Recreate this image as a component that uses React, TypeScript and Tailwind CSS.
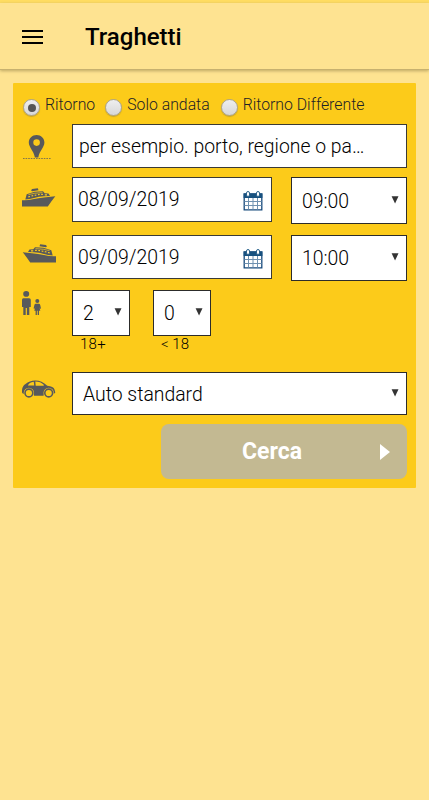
import React, { useState } from "react";

const Arrow = () => (
  <svg className="w-[8px] h-[8px] mb-[2px] shrink-0" viewBox="0 0 8 8" fill="#333">
    <path d="M0.6 0.3h6.900L4.050 7.500z" />
  </svg>
);

const PinIcon = () => (
  <svg className="w-[30px] h-[25px]" viewBox="0 0 30 25">
    <path
      fill="#58595b"
      fillRule="evenodd"
      d="M14.600 0c4.400 0 7.800 3.300 7.800 7.500C22.400 12.200 17.600 15.500 16.300 22.500h-3.400C11.600 15.500 6.800 12.200 6.800 7.500 6.800 3.300 10.200 0 14.600 0zm0 4.300a3.300 3.300 0 100 6.600 3.300 3.300 0 000-6.600z"
    />
    <path stroke="#58595b" strokeOpacity=".75" strokeWidth="1" strokeDasharray="1.600 1" d="M1 23.500h28" />
  </svg>
);

const FerryIcon = ({ back = false }: { back?: boolean }) => (
  <svg
    className={back ? "w-[34px] h-[20px] -scale-x-100" : "w-[34px] h-[20px]"}
    viewBox="0 0 34 20"
    fill="#58595b"
  >
    <path d="M0 12.300Q6 12.600 12 11.100T24 9.200L33.300 8.200Q29.500 13 25.800 18.500H0z" />
    <path d="M3.300 11.400L4.700 6.300L12.500 3.800L21 3.200L22.700 5.300L26.500 5.500L28 8L22 8.300Q17 8.600 12 9.900Q8 11.200 3.300 11.400z" />
    <path d="M9 2.200L10.200 .9L15.800 .3L16.500 2.200L10 3.200z" />
    <path
      stroke="#fccb1a"
      strokeWidth="1.200"
      fill="none"
      d="M6.300 8.900l1.700-.4M9.500 8l1.700-.4M12.700 7.300l1.700-.3M16 6.700l1.700-.2M19.200 6.400h1.700M22.800 6.900h2.200"
    />
    <path stroke="#fccb1a" strokeWidth=".7" fill="none" d="M6.500 6.600Q12 4.900 20.500 4.600" />
  </svg>
);

const PeopleIcon = () => (
  <svg className="w-[20px] h-[25px]" viewBox="0 0 20 25" fill="#58595b">
    <ellipse cx="4.200" cy="2.900" rx="3" ry="2.800" />
    <path d="M1.300 7.300h5.800Q8.800 7.300 8.800 9v7H7.300V24H4.900v-7H3.700v7H1.300v-8H0V9Q0 7.300 1.300 7.300z" />
    <circle cx="15.300" cy="9.900" r="2" />
    <path d="M13.700 12.700h3.200q1 0 1.300 1.200l.8 3.500-1.100.3-.8-2.400 1.200 4.500H17V24h-1.300v-4.200h-.8V24h-1.300v-4.200h-1.300l1.200-4.500-.8 2.400-1.100-.3.800-3.500Q12.700 12.700 13.700 12.700z" />
  </svg>
);

const CarIcon = () => (
  <svg className="w-[34px] h-[18px]" viewBox="0 0 34 18">
    <path
      fill="#58595b"
      d="M0 12.500Q-.5 6.500 3.500 4Q7.500 .5 13 .5Q19.500 .3 25.300 5.800Q31.500 6.500 32.500 9.500L33.300 12.500L32 13.700H22L21.500 15.800H12L11.500 13.700H1z"
    />
    <path fill="#fccb1a" d="M5.800 5.400Q7 2.500 11.800 1.700L12.200 5.600H5.800zM13.300 1.600Q18.500 1.600 22 5L21.500 5.700H13.700z" />
    <circle cx="6.900" cy="12.900" r="5.200" fill="#fccb1a" />
    <circle cx="6.900" cy="13" r="3.900" fill="#fccb1a" stroke="#58595b" strokeWidth="1.600" />
    <circle cx="26.700" cy="12.900" r="5.200" fill="#fccb1a" />
    <circle cx="26.700" cy="13" r="3.900" fill="#fccb1a" stroke="#58595b" strokeWidth="1.600" />
  </svg>
);

const CalendarIcon = () => (
  <svg className="w-[20px] h-[20px]" viewBox="0 0 20 20">
    <path fill="#fff" stroke="#174a7c" strokeWidth="1.300" d="M1.200 3h17.600v15.800H1.200z" />
    <path fill="#17517f" d="M.6 2.500h18.800v4.500H.6z" />
    <path stroke="#6f91b0" strokeWidth="1" d="M5.500 7v11.500M10 7v11.500M14.500 7v11.500M1.500 10.500h17M1.500 14.500h17" />
    <rect x="3.500" y=".5" width="3" height="5" rx="1.500" fill="#fff" stroke="#2c638c" />
    <rect x="13.500" y=".5" width="3" height="5" rx="1.500" fill="#fff" stroke="#2c638c" />
  </svg>
);

const Radio = ({ label, checked, onClick, className }: any) => (
  <button type="button" onClick={onClick} className={`flex items-start ${className}`}>
    <span className="mt-[4px] w-[17px] h-[17px] rounded-full border border-[#aaa38c] bg-linear-to-b from-[#eee] to-[#d8d8d8] flex items-center justify-center shadow-[0_1px_1px_#c9a529]">
      {checked && <span className="w-[8px] h-[8px] rounded-full bg-[#555]"></span>}
    </span>
    <span className="ml-[5px] text-[15.8px] leading-[20px] whitespace-nowrap text-[#1c2226]">{label}</span>
  </button>
);

const Select = ({ value, className }: { value: string; className: string }) => (
  <div
    className={`flex items-center justify-between bg-white border-[1.5px] border-[#2c2c2a] pl-[10px] pr-[7px] ${className}`}
  >
    <span className="pt-[2px]">{value}</span>
    <Arrow />
  </div>
);

const DateField = ({ value, className }: { value: string; className: string }) => (
  <div
    className={`flex items-center justify-between w-[200px] bg-white border border-[#3a3a35] pl-[5px] pr-[8px] ${className}`}
  >
    <span className="pt-[1px]">{value}</span>
    <span className="mt-[3px]">
      <CalendarIcon />
    </span>
  </div>
);

const trips = ["Ritorno", "Solo andata", "Ritorno Differente"];
const tripMargins = ["", "ml-[10px]", "ml-[11px]"];

const App = () => {
  const [trip, setTrip] = useState(0);

  return (
    <div className="min-h-[800px] w-full bg-[#fee391] font-['Roboto',sans-serif]">
      <div className="h-[3px] bg-[#ffdd61]"></div>
      <header className="flex items-center h-[67px] pl-[22px] pt-[1px] bg-[#fee391] border-b border-[#c7b16f] shadow-[0_1px_3px_#bda764]">
        <div className="w-[21px] h-[14px] flex flex-col justify-between">
          <span className="h-[2px] bg-black"></span>
          <span className="h-[2px] bg-black"></span>
          <span className="h-[2px] bg-black"></span>
        </div>
        <h1 className="ml-[42px] text-[24px] font-medium leading-none text-black">Traghetti</h1>
      </header>

      <form className="mt-[13px] ml-[13px] w-[403px] h-[405px] rounded-[1px] bg-[#fccb1a] text-[19.4px] font-light leading-none text-black">
        <div className="flex h-[41px] pl-[10px] pt-[12px]">
          {trips.map((label, index) => (
            <Radio
              key={label}
              label={label}
              checked={trip === index}
              onClick={() => setTrip(index)}
              className={tripMargins[index]}
            />
          ))}
        </div>

        <div className="flex h-[53px] pl-[9px]">
          <div className="w-[50px] pt-[11px]">
            <PinIcon />
          </div>
          <div className="flex items-center w-[335px] h-[44px] bg-white border border-[#3a3a35] pl-[6px] pt-[1px]">
            per esempio. porto, regione o pa…
          </div>
        </div>

        <div className="flex h-[58px] pl-[9px]">
          <div className="w-[50px] pt-[11px]">
            <FerryIcon />
          </div>
          <DateField value="08/09/2019" className="h-[45px]" />
          <Select value="09:00" className="ml-[19px] w-[116px] h-[47px]" />
        </div>

        <div className="flex h-[55px] pl-[9px]">
          <div className="w-[50px] pt-[9px]">
            <FerryIcon back />
          </div>
          <DateField value="09/09/2019" className="h-[44px]" />
          <Select value="10:00" className="ml-[19px] w-[116px] h-[46px]" />
        </div>

        <div className="flex h-[82px] pl-[9px]">
          <div className="w-[50px] pt-[1px]">
            <PeopleIcon />
          </div>
          <div className="w-[81px]">
            <Select value="2" className="w-[58px] h-[46px]" />
            <p className="pl-[8px] pt-[1px] text-[15px] tracking-[0.3px]">18+</p>
          </div>
          <div>
            <Select value="0" className="w-[58px] h-[46px]" />
            <p className="pl-[8px] pt-[1px] text-[15px]">&lt; 18</p>
          </div>
        </div>

        <div className="flex h-[52px] pl-[9px]">
          <div className="w-[50px] pt-[8px]">
            <CarIcon />
          </div>
          <Select value="Auto standard" className="w-[335px] h-[43px]" />
        </div>

        <button
          type="button"
          className="ml-[148px] flex items-center justify-between w-[246px] h-[55px] rounded-[8px] bg-[#c3b992] pl-[81px] pr-[17px] text-[23px] font-bold text-white"
        >
          Cerca
          <svg className="w-[10px] h-[16px] mt-[1px]" viewBox="0 0 10 16" fill="#fff">
            <path d="M0 0l10 8-10 8z" />
          </svg>
        </button>
      </form>
    </div>
  );
};

export default App;
